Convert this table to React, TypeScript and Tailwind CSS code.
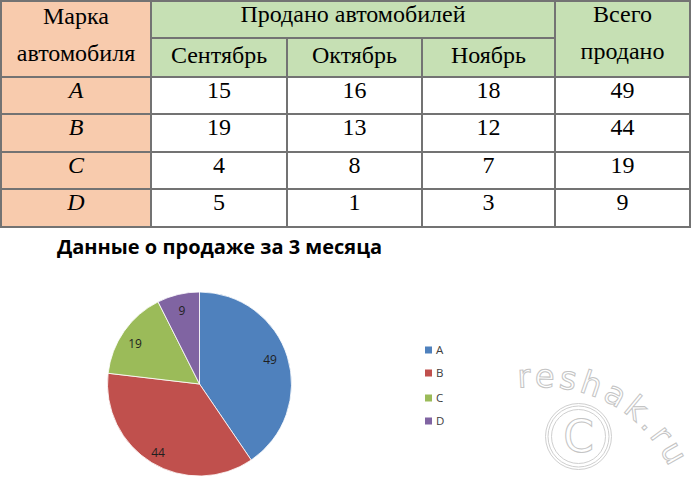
import React from "react";

const serif = { fontFamily: '"Liberation Serif", "Times New Roman", serif' };

const rows: [string, number, number, number, number][] = [
  ["A", 15, 16, 18, 49],
  ["B", 19, 13, 12, 44],
  ["C", 4, 8, 7, 19],
  ["D", 5, 1, 3, 9],
];

const CX = 199.5;
const CY = 384;
const R = 92;

function slicePath(a0: number, a1: number) {
  const p = (a: number) => {
    const t = (a * Math.PI) / 180;
    return [CX + R * Math.sin(t), CY - R * Math.cos(t)];
  };
  const [x0, y0] = p(a0);
  const [x1, y1] = p(a1);
  const large = a1 - a0 > 180 ? 1 : 0;
  return `M ${CX} ${CY} L ${x0} ${y0} A ${R} ${R} 0 ${large} 1 ${x1} ${y1} Z`;
}

const slices = [
  { v: 49, c: "#4f81bd", label: "A" },
  { v: 44, c: "#c0504d", label: "B" },
  { v: 19, c: "#9bbb59", label: "C" },
  { v: 9, c: "#8064a2", label: "D" },
];

const labels = [
  { t: "49", x: 270, y: 359 },
  { t: "44", x: 158, y: 452 },
  { t: "19", x: 135, y: 343 },
  { t: "9", x: 182, y: 310 },
];

export default function App() {
  const total = slices.reduce((s, x) => s + x.v, 0);
  let acc = 0;
  const paths = slices.map((s) => {
    const a0 = (acc / total) * 360;
    acc += s.v;
    const a1 = (acc / total) * 360;
    return { d: slicePath(a0, a1), c: s.c };
  });

  return (
    <div className="w-[691px] h-[484px] bg-white overflow-hidden">
      <div
        className="grid w-[691px] bg-[#737373] gap-[2px] p-[2px] grid-cols-[148px_134px_133px_131px_133px] grid-rows-[35px_37px_35px_36px_35px_36px] text-[24px] leading-[24px] text-black"
        style={serif}
      >
        <div className="row-span-2 bg-[#f8cbad] flex flex-col items-center gap-[13px] pt-[2px]">
          <span>Марка</span>
          <span>автомобиля</span>
        </div>
        <div className="col-span-3 bg-[#c6e0b4] text-center">Продано автомобилей</div>
        <div className="row-span-2 bg-[#c6e0b4] flex flex-col items-center gap-[13px]">
          <span>Всего</span>
          <span>продано</span>
        </div>
        <div className="bg-[#c6e0b4] text-center pt-[4px]">Сентябрь</div>
        <div className="bg-[#c6e0b4] text-center pt-[4px]">Октябрь</div>
        <div className="bg-[#c6e0b4] text-center pt-[4px]">Ноябрь</div>
        {rows.map((r) => (
          <React.Fragment key={r[0]}>
            <div className="bg-[#f8cbad] text-center italic">{r[0]}</div>
            <div className="bg-white text-center">{r[1]}</div>
            <div className="bg-white text-center">{r[2]}</div>
            <div className="bg-white text-center">{r[3]}</div>
            <div className="bg-white text-center">{r[4]}</div>
          </React.Fragment>
        ))}
      </div>

      <div
        className="h-[34px] pl-[57px] pt-[7px] text-[20px] leading-[24px] font-bold text-black"
        style={{ fontFamily: '"Open Sans", "Liberation Sans", sans-serif' }}
      >
        Данные о продаже за 3 месяца
      </div>

      <svg width="691" height="222" viewBox="0 262 691 222" className="block">
        {paths.map((p, i) => (
          <path key={i} d={p.d} fill={p.c} stroke="#ffffff" strokeWidth="0.8" />
        ))}
        {labels.map((l) => (
          <text
            key={l.t}
            x={l.x}
            y={l.y + 4.5}
            textAnchor="middle"
            fontSize="12"
            fill="#1f1f1f"
            fontFamily='"Open Sans", "Liberation Sans", sans-serif'
          >
            {l.t}
          </text>
        ))}
        {slices.map((s, i) => {
          const cy = [350, 373, 398, 421][i];
          return (
            <g key={s.label}>
              <rect x="425" y={cy - 3.5} width="7" height="7" fill={s.c} />
              <text
                x="436"
                y={cy + 4}
                fontSize="11.5"
                fill="#404040"
                fontFamily='"Open Sans", "Liberation Sans", sans-serif'
              >
                {s.label}
              </text>
            </g>
          );
        })}

        {/* watermark */}
        <defs>
          <path id="wm" d="M 518 388 C 585 382, 645 405, 677 484" />
        </defs>
        <text
          fontSize="32"
          fill="#ffffff"
          stroke="#c4c4c4"
          strokeWidth="1"
          letterSpacing="4"
          fontFamily='"DejaVu Sans", sans-serif'
        >
          <textPath href="#wm">reshak.ru</textPath>
        </text>
        <circle cx="578.5" cy="436.5" r="33" fill="none" stroke="#cfcfcf" strokeWidth="1" />
        <circle cx="578.5" cy="436.5" r="30.5" fill="none" stroke="#cfcfcf" strokeWidth="1" />
        <circle cx="578.5" cy="436.5" r="27" fill="none" stroke="#cfcfcf" strokeWidth="1" />
        <text
          x="578.5"
          y="452"
          textAnchor="middle"
          fontSize="44"
          fill="#ffffff"
          stroke="#c4c4c4"
          strokeWidth="1"
          fontFamily='"DejaVu Sans", sans-serif'
        >
          C
        </text>
      </svg>
    </div>
  );
}
